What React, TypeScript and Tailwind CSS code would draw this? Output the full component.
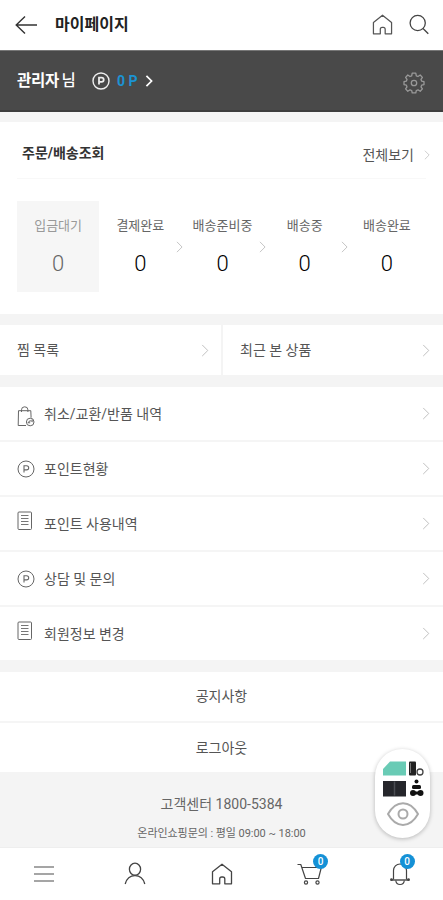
import type { ReactNode } from "react";
import clsx from "clsx";

// ── Icons ───────────────────────────────────────────────────────

function Chevron({ className }: { className?: string }) {
  return (
    <svg viewBox="0 0 8 14" fill="none" stroke="currentColor" className={clsx("shrink-0", className)}>
      <path d="M1 1l6 6-6 6" />
    </svg>
  );
}

function HomeIcon({ className }: { className?: string }) {
  return (
    <svg viewBox="0 0 22 22" fill="none" stroke="currentColor" strokeWidth="1.3" strokeLinejoin="round" className={className}>
      <path d="M1.500 8.800 11 1.200l9.500 7.600v12h-6.700v-4.800a2 2 0 0 0-2-2h-1.100a2 2 0 0 0-2 2v4.800H1.500z" />
    </svg>
  );
}

function PointIcon({ bold }: { bold?: boolean }) {
  return (
    <svg
      width="18"
      height="18"
      viewBox="0 0 18 18"
      fill="none"
      stroke="currentColor"
      strokeWidth={bold ? 1.4 : 1}
      className="shrink-0"
    >
      <circle cx="9" cy="9" r="8" />
      <path d="M7 12.6V5.7h2.6a2.1 2.1 0 0 1 0 4.2H7" strokeWidth={bold ? 1.8 : 1.1} />
    </svg>
  );
}

function DocIcon() {
  return (
    <svg width="18" height="20" viewBox="0 0 18 20" fill="none" stroke="currentColor" className="-mt-[5px] shrink-0">
      <rect x="1" y="1" width="13.5" height="17.5" rx="1" />
      <path d="M4 4.500h7.500M4 7.500h7.500M4 10.500h7.500M4 13.500h7.500" strokeWidth="0.9" />
    </svg>
  );
}

function BagIcon() {
  return (
    <svg width="18" height="21" viewBox="0 0 18 21" fill="none" stroke="currentColor" className="mt-[5px] shrink-0">
      <path d="M9 19.500H1.200L1.500 4.700h12.300l.3 7" />
      <path d="M4.500 6V3.800a3.200 3 0 0 1 6.400 0V6" />
      <circle cx="13.200" cy="16" r="3.800" />
      <path d="M11 16.700c1-2.200 3.200-2.400 4.300-1M11 16.700l2.200.1M15.300 15.700l-.2-2" />
    </svg>
  );
}

function GearIcon() {
  return (
    <svg width="22" height="22" viewBox="0 0 22 22" fill="none" stroke="currentColor" strokeWidth="1.3" strokeLinejoin="round">
      <path d="M9.200 1.200h3.600l.5 2.600 1.700.7 2.200-1.500 2.200 2.400-1.400 2 .7 1.800 2.300.5v2.900l-2.300.5-.7 1.800 1.400 2-2.200 2.400-2.200-1.500-1.700.7-.5 2.300H9.200l-.5-2.300-1.700-.7-2.200 1.500-2.200-2.400 1.400-2-.7-1.800-2.300-.5V9.700l2.300-.5.700-1.800-1.400-2L4.800 3 7 4.500l1.700-.7z" />
      <circle cx="11" cy="11" r="2.700" />
    </svg>
  );
}

function CartIcon() {
  return (
    <svg width="26" height="24" viewBox="0 0 26 24" fill="none" stroke="currentColor" strokeWidth="1.2">
      <path d="M.5 2.500h3.300l4.700 14h13L24.300 5.500H5" strokeLinejoin="round" />
      <circle cx="9" cy="20.500" r="1.600" />
      <circle cx="20.500" cy="20.500" r="1.600" />
    </svg>
  );
}

function BellIcon() {
  return (
    <svg width="20" height="24" viewBox="0 0 20 24" fill="none" stroke="currentColor" strokeWidth="1.2">
      <path d="M3.500 17.500V8.500a6.500 6.500 0 0 1 13 0v9" />
      <path d="M.8 18h18.400" strokeWidth="1.400" />
      <path d="M5.800 18.500c.5 5.300 8 5.300 8.500 0" />
      <circle cx="1.500" cy="17.700" r=".8" fill="currentColor" />
      <circle cx="18.500" cy="17.700" r=".8" fill="currentColor" />
    </svg>
  );
}

// ── Data ────────────────────────────────────────────────────────

const steps = [
  { label: "입금대기", count: 0 },
  { label: "결제완료", count: 0 },
  { label: "배송준비중", count: 0 },
  { label: "배송중", count: 0 },
  { label: "배송완료", count: 0 },
];

const menu: { label: string; icon: ReactNode }[] = [
  { label: "취소/교환/반품 내역", icon: <BagIcon /> },
  { label: "포인트현황", icon: <PointIcon /> },
  { label: "포인트 사용내역", icon: <DocIcon /> },
  { label: "상담 및 문의", icon: <PointIcon /> },
  { label: "회원정보 변경", icon: <DocIcon /> },
];

// ── Sections ────────────────────────────────────────────────────

function Header() {
  return (
    <header className="flex h-[50px] items-center bg-white pr-[14px] pb-[1px] pl-[15px] text-[#333]">
      <svg width="23" height="20" viewBox="0 0 23 20" fill="none" stroke="currentColor" strokeWidth="1.4">
        <path d="M10 1.500 1.200 10l8.800 8.500M1.200 10H22" />
      </svg>
      <h1 className="ml-[17px] flex-1 text-[16px] leading-5 font-bold text-[#222]">마이페이지</h1>
      <HomeIcon className="size-[21px] text-[#555]" />
      <svg width="20" height="21" viewBox="0 0 20 21" fill="none" stroke="currentColor" strokeWidth="1.3" className="ml-[16px] text-[#444]">
        <circle cx="8.700" cy="9" r="7.600" />
        <path d="m14 14.500 5.300 5.300" />
      </svg>
    </header>
  );
}

function Profile() {
  return (
    <section className="flex h-[62px] items-center border-t border-b-2 border-t-[#777] border-b-[#3d3d3d] bg-[#494949] pr-[18px] pl-[17px] text-white">
      <p className="w-[59px] text-[15.500px] leading-5 font-bold tracking-[-0.3px] whitespace-nowrap">
        관리자 <span className="-ml-[1px] font-medium">님</span>
      </p>
      <span className="ml-[16px] text-[#eee]">
        <PointIcon bold />
      </span>
      <b className="ml-[7px] text-[14px] leading-5 font-bold text-[#1c93d3]">0 P</b>
      <Chevron className="ml-[7px] h-[12px] w-[8px] stroke-2" />
      <span className="mt-[4px] ml-auto text-[#999]">
        <GearIcon />
      </span>
    </section>
  );
}

function Orders() {
  return (
    <section className="h-[192px] bg-white px-[17px]">
      <div className="flex h-[57px] items-center border-b border-[#f8f8f8] pt-[9px] pl-[5px]">
        <h2 className="-mt-[3px] flex-1 text-[14px] leading-5 font-bold text-[#333]">주문/배송조회</h2>
        <span className="text-[14px] leading-5 text-[#555]">전체보기</span>
        <Chevron className="-mr-[4px] ml-[10px] h-[10px] w-[6px] text-[#bbb]" />
      </div>
      <ol className="mt-[22px] flex w-[411px]">
        {steps.map((step, i) => (
          <li
            key={step.label}
            className={clsx(
              "relative flex h-[91px] flex-1 flex-col items-center pt-[15px]",
              i === 0 ? "bg-[#f6f6f6] text-[#666]" : "text-black",
            )}
          >
            <span className={clsx("text-[13px] leading-5 whitespace-nowrap", i === 0 ? "text-[#999]" : "text-[#666]")}>
              {step.label}
            </span>
            <span className="mt-[14px] text-[22px] leading-7 font-light">{step.count}</span>
            {i > 0 && i < 4 && <Chevron className="absolute top-[40px] -right-[2px] h-[12px] w-[7px] text-[#bbb]" />}
          </li>
        ))}
      </ol>
    </section>
  );
}

function Shortcuts() {
  return (
    <section className="flex h-[50px] bg-white text-[14px] text-[#555]">
      <div className="flex w-[223px] items-center border-r-2 border-[#f4f4f4] pr-[12px] pl-[17px]">
        <span className="flex-1">찜 목록</span>
        <Chevron className="h-[13px] w-[8px] text-[#bbb]" />
      </div>
      <div className="flex flex-1 items-center pr-[13px] pl-[17px]">
        <span className="flex-1">최근 본 상품</span>
        <Chevron className="h-[13px] w-[8px] text-[#bbb]" />
      </div>
    </section>
  );
}

function Menu() {
  return (
    <ul className="bg-white">
      {menu.map((item, i) => (
        <li
          key={item.label}
          className={clsx(
            "flex items-center pr-[13px] pl-[17px] text-[#666]",
            i === menu.length - 1 ? "h-[53px]" : "h-[55px] border-b-2 border-[#f5f5f5]",
          )}
        >
          {item.icon}
          <span className="ml-[9px] flex-1 text-[14px] leading-5 text-[#555]">{item.label}</span>
          <Chevron className="h-[13px] w-[8px] text-[#bbb]" />
        </li>
      ))}
    </ul>
  );
}

// Recently viewed products, floats above the footer
function RecentPill() {
  return (
    <div className="absolute right-[13px] bottom-[62px] flex h-[89px] w-[55px] flex-col items-center rounded-full bg-white pt-[11px] shadow-[0_1px_4px_rgba(0,0,0,0.25)]">
      <svg width="42" height="37" viewBox="0 0 42 37">
        <path d="M1 15.500V9l7-7.500h16v14z" fill="#69cbb5" />
        <rect x="27" y="1.500" width="7" height="14" rx="1" fill="#222" />
        <path d="M28.500 3v10" stroke="#777" />
        <circle cx="38" cy="12" r="3" fill="none" stroke="#444" strokeWidth="1.300" />
        <rect x="1" y="21" width="23" height="15.500" fill="#25262b" />
        <path d="M12.500 21.500v14" stroke="#4b4c52" strokeWidth="1.500" />
        <g fill="#111">
          <circle cx="34.500" cy="21.500" r="2" />
          <rect x="30" y="25" width="9" height="4" rx="1.500" />
          <circle cx="31" cy="33" r="3" />
          <circle cx="38.500" cy="33" r="3" />
          <rect x="31" y="31.500" width="7" height="3" />
        </g>
      </svg>
      <svg width="32" height="24" viewBox="0 0 32 24" fill="none" stroke="#aaa" strokeWidth="2" strokeLinejoin="round" className="mt-[5px]">
        <path d="M1 12C9-2.500 23-2.500 31 12 23 26.500 9 26.500 1 12z" />
        <circle cx="16" cy="12" r="4.500" />
      </svg>
    </div>
  );
}

function Badge({ count }: { count: number }) {
  return (
    <span className="absolute -top-[8px] -right-[5px] flex size-[15px] items-center justify-center rounded-full bg-[#1591d6] text-[10px] leading-none font-medium text-white">
      {count}
    </span>
  );
}

function BottomNav() {
  return (
    <nav className="grid h-[53px] grid-cols-5 items-center justify-items-center border-t border-[#eee] bg-white text-[#444]">
      <svg width="20" height="16" viewBox="0 0 20 16" stroke="#888" strokeWidth="1.500">
        <path d="M0 1h20M0 8h20M0 15h20" />
      </svg>
      <svg width="22" height="23" viewBox="0 0 22 23" fill="none" stroke="currentColor" strokeWidth="1.300" className="-mt-[2px] -mr-[4px]">
        <ellipse cx="11" cy="7.200" rx="5.600" ry="6" />
        <path d="M1.200 22c1.500-5.500 5-8.300 9.800-8.300s8.300 2.800 9.800 8.300" />
      </svg>
      <HomeIcon className="-mr-[1px] size-[22px]" />
      <span className="relative">
        <CartIcon />
        <Badge count={0} />
      </span>
      <span className="relative -mr-[2px]">
        <BellIcon />
        <Badge count={0} />
      </span>
    </nav>
  );
}

export default function App() {
  return (
    <div className="relative flex h-[900px] w-[443px] flex-col overflow-hidden bg-[#f4f4f4] font-['Roboto','Noto_Sans_CJK_KR',sans-serif]">
      <Header />
      <Profile />
      <div className="h-[10px]" />
      <Orders />
      <div className="h-[11px]" />
      <Shortcuts />
      <div className="h-[12px]" />
      <Menu />
      <div className="h-[12px]" />
      <section className="bg-white text-center text-[14px] text-[#555]">
        <p className="h-[51px] border-b-2 border-[#f5f5f5] leading-[49px]">공지사항</p>
        <p className="h-[49px] leading-[50px]">로그아웃</p>
      </section>
      <footer className="h-[75px] pt-[22px] text-center text-[#666]">
        <p className="text-[14px] leading-5">고객센터 1800-5384</p>
        <p className="mt-[10px] text-[11px] leading-5 tracking-[-0.05px]">온라인쇼핑문의 : 평일 09:00 ~ 18:00</p>
      </footer>
      <BottomNav />
      <RecentPill />
    </div>
  );
}
